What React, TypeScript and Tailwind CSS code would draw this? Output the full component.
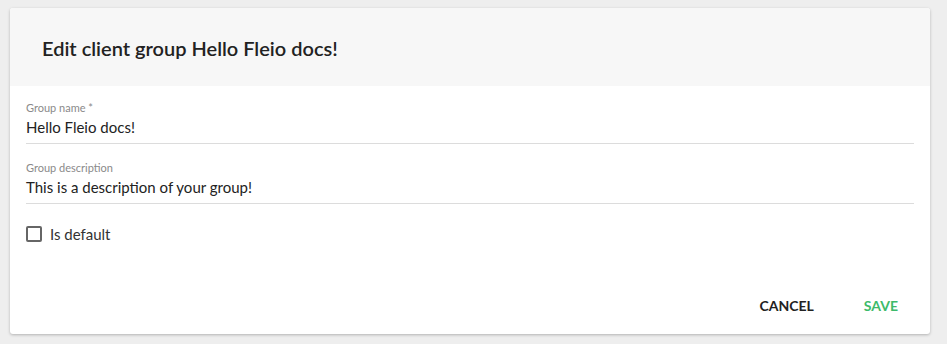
export default function App() {
  return (
    <div className="min-h-[344px] w-full bg-[#eeeeee] pt-2 pl-[10px] pr-[17px]" style={{ fontFamily: "Lato, 'Open Sans', sans-serif" }}>
      <div className="w-[920px] rounded-[3px] bg-white shadow-[0_1px_3px_rgba(0,0,0,0.25)] overflow-hidden">
        <div className="h-[78px] bg-[#f7f7f7] pl-8 flex items-center">
          <h1 className="text-[20px] font-semibold text-[#222] leading-none pt-[1px]">Edit client group Hello Fleio docs!</h1>
        </div>
        <div className="px-4 pt-[15px]">
          <div className="border-b border-[#dcdcdc] pb-[6px]">
            <div className="text-[11px] text-[#8a8a8a] leading-[14px]">Group name *</div>
            <div className="text-[15px] text-[#222] leading-[20px] mt-[2px]">Hello Fleio docs!</div>
          </div>
          <div className="border-b border-[#dcdcdc] pb-[6px] mt-[17px]">
            <div className="text-[11px] text-[#8a8a8a] leading-[14px]">Group description</div>
            <div className="text-[15px] text-[#222] leading-[20px] mt-[2px]">This is a description of your group!</div>
          </div>
          <label className="flex items-center mt-[20px]">
            <span className="w-4 h-4 rounded-[2px] border-2 border-[#666] mr-[8px]" />
            <span className="text-[15px] text-[#333] leading-[20px]">Is default</span>
          </label>
          <div className="flex justify-end items-center mt-[54px] pb-[20px] pr-[16px] gap-[50px]">
            <button className="text-[14px] font-bold text-[#222] uppercase leading-[16px]">Cancel</button>
            <button className="text-[14px] font-bold text-[#3dba6a] uppercase leading-[16px]">Save</button>
          </div>
        </div>
      </div>
    </div>
  );
}
